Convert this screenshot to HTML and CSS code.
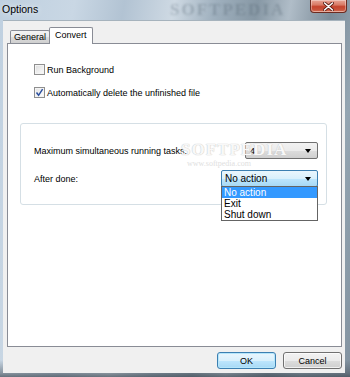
FILE: index.html
```html
<!DOCTYPE html>
<html>
<head>
<meta charset="utf-8">
<link rel="stylesheet" href="styles.css">
</head>
<body>
<div class="window">
  <div class="titlebar">
    <span class="title">Options</span>
    <span class="glass-mark">SOFTPEDIA</span>
    <div class="close">
      <svg width="11" height="9" viewBox="0 0 11 9"><path d="M1.5 1 L9.5 8 M9.5 1 L1.5 8" stroke="#5a1c12" stroke-width="3.2" stroke-linecap="round"/><path d="M1.5 1 L9.5 8 M9.5 1 L1.5 8" stroke="#fff" stroke-width="1.6" stroke-linecap="round"/></svg>
    </div>
  </div>
  <div class="client">
    <div class="tabs">
      <div class="tab">General</div>
      <div class="tab active">Convert</div>
    </div>
    <div class="panel">
      <div class="checks">
        <label class="check"><span class="box"></span><span>Run Background</span></label>
        <label class="check"><span class="box checked"><svg width="9" height="9" viewBox="0 0 9 9"><path d="M1.5 4.5 L3.6 7.3 L7.6 1.2" fill="none" stroke="#2b4f9e" stroke-width="1.5"/></svg></span><span>Automatically delete the unfinished file</span></label>
      </div>
      <div class="group">
        <div class="row">
          <span>Maximum simultaneous running tasks:</span>
          <div class="combo small"><span>4</span><i class="arrow"></i></div>
        </div>
        <div class="row">
          <span>After done:</span>
          <div class="combo focus"><span>No action</span><i class="arrow"></i>
            <ul class="list">
              <li class="sel">No action</li>
              <li>Exit</li>
              <li>Shut down</li>
            </ul>
          </div>
        </div>
        <div class="mark">
          <span class="mark-big">SOFTPEDIA</span>
          <span class="mark-small">www.softpedia.com</span>
        </div>
      </div>
    </div>
    <div class="buttons">
      <button class="btn default">OK</button>
      <button class="btn">Cancel</button>
    </div>
  </div>
</div>
</body>
</html>
```

FILE: styles.css
```css
* { box-sizing: border-box; }
html, body { margin: 0; padding: 0; }
body {
  width: 350px;
  height: 377px;
  overflow: hidden;
  font-family: "Liberation Sans", Arial, sans-serif;
  font-size: 9px;
  color: #000;
}
.window {
  width: 350px;
  height: 377px;
  display: flex;
  flex-direction: column;
  background:
    linear-gradient(180deg, rgba(255,255,255,0) 0, rgba(255,255,255,0) 360px, rgba(70,80,90,0.5) 373px, rgba(60,70,80,0.7) 377px),
    linear-gradient(100deg, #bfd0e0 0%, #c9d7e4 18%, #b2c3d3 30%, #ced9e3 42%, #9fb0be 52%, #8798a5 62%, #b0bdc8 70%, #7b8b98 80%, #94a5b2 88%, #8292a0 100%);
  position: relative;
}
.titlebar {
  height: 20px;
  display: flex;
  justify-content: space-between;
  align-items: flex-start;
  padding: 0 3px 0 2px;
  position: relative;
}
.title {
  font-size: 10.5px;
  padding-top: 3px;
  color: #000;
  text-shadow: 0 0 6px rgba(255,255,255,0.9);
}
.glass-mark {
  position: absolute;
  left: 170px;
  top: 0;
  font-family: "Liberation Serif", serif;
  font-size: 17px;
  font-weight: bold;
  letter-spacing: 2px;
  color: rgba(80,95,108,0.3);
  filter: blur(1.2px);
}
.close {
  width: 37px;
  height: 13px;
  border: 1px solid #6d2b20;
  border-top: none;
  border-radius: 0 0 4px 4px;
  background: linear-gradient(180deg, #e8a596 0%, #d97b66 40%, #c5442d 55%, #c9553d 85%, #e08f77 100%);
  display: flex;
  align-items: center;
  justify-content: center;
  box-shadow: inset 0 0 0 1px rgba(255,255,255,0.35);
  position: relative;
  z-index: 1;
}
.client {
  flex: 1;
  margin: 0 5px 4px 3px;
  background: #f0f0f0;
  padding: 6px 3px 0 4px;
  display: flex;
  flex-direction: column;
  border-top: 1px solid #a6b3bd;
}
.tabs {
  display: flex;
  align-items: flex-end;
  height: 16px;
  padding-left: 3px;
  position: relative;
  z-index: 2;
}
.tab {
  height: 13px;
  border: 1px solid #898c95;
  border-bottom: none;
  background: linear-gradient(180deg, #f3f3f3 0%, #ebebeb 50%, #dcdcdc 51%, #cfcfcf 100%);
  padding: 0 3px 0 3px;
  line-height: 12px;
  border-radius: 2px 2px 0 0;
}
.tab.active {
  height: 17px;
  margin-bottom: -1px;
  margin-left: -1px;
  background: #fff;
  padding: 1px 5px 0 5px;
  line-height: 13px;
}
.panel {
  height: 304px;
  border: 1px solid #898c95;
  background: #fff;
  padding: 20px 14px 0 12px;
  position: relative;
}
.checks {
  display: flex;
  flex-direction: column;
  gap: 12px;
  padding-left: 14px;
}
.check {
  display: flex;
  align-items: center;
  gap: 2px;
  height: 11px;
}
.box {
  width: 11px;
  height: 11px;
  border: 1px solid #8f8f8f;
  background: linear-gradient(135deg, #dcdcdc 0%, #f0f0f0 60%, #fbfbfb 100%);
  box-shadow: inset 0 0 0 1px #f4f4f4;
  display: flex;
  align-items: center;
  justify-content: center;
}
.box.checked { background: linear-gradient(135deg, #e2e2e2 0%, #f4f4f4 60%, #ffffff 100%); }
.group {
  margin-top: 25px;
  width: 307px;
  height: 82px;
  border: 1px solid #d5dfe5;
  border-radius: 3px;
  padding: 18px 8px 0 13px;
  display: flex;
  flex-direction: column;
  gap: 11px;
  position: relative;
}
.row {
  display: flex;
  justify-content: space-between;
  align-items: center;
  height: 17px;
}
.combo {
  position: relative;
  height: 17px;
  width: 97px;
  border: 1px solid #707070;
  border-radius: 2px;
  background: linear-gradient(180deg, #f2f2f2 0%, #ebebeb 50%, #dddddd 51%, #cfcfcf 100%);
  display: flex;
  align-items: center;
  padding-left: 4px;
}
.combo.small { width: 73px; }
.combo.focus {
  border-color: #3c7fb1;
  background: linear-gradient(180deg, #eaf6fd 0%, #d9f0fc 50%, #bee6fd 51%, #a7d9f5 100%);
  font-size: 10px;
  padding-left: 3px;
}
.arrow {
  position: absolute;
  right: 6px;
  top: 6px;
  width: 0;
  height: 0;
  border-left: 3.5px solid transparent;
  border-right: 3.5px solid transparent;
  border-top: 4px solid #000;
}
.list {
  position: absolute;
  left: -1px;
  top: 15px;
  width: 97px;
  margin: 0;
  padding: 0;
  list-style: none;
  background: #fff;
  border: 1px solid #646464;
  z-index: 5;
  font-size: 10px;
}
.list li {
  height: 11px;
  line-height: 11px;
  padding-left: 2px;
}
.list li.sel { background: #3399ff; color: #fff; }
.mark {
  position: absolute;
  left: 160px;
  top: 18px;
  display: flex;
  flex-direction: column;
  align-items: flex-start;
  pointer-events: none;
  z-index: 1;
}
.mark-big {
  font-family: "Liberation Serif", serif;
  font-size: 17px;
  font-weight: bold;
  letter-spacing: 1px;
  color: rgba(255,255,255,0.9);
  text-shadow: 0 0 1px #c8c8c8, 0 0 1px #c8c8c8;
  line-height: 16px;
}
.mark-small {
  font-family: "Liberation Serif", serif;
  font-size: 8px;
  color: #e0e0e0;
  margin-left: 6px;
  margin-top: 1px;
}
.buttons {
  display: flex;
  justify-content: flex-end;
  gap: 7px;
  padding-top: 5px;
}
.btn {
  font-family: "Liberation Sans", Arial, sans-serif;
  font-size: 9px;
  width: 59px;
  height: 17px;
  border: 1px solid #707070;
  border-radius: 3px;
  background: linear-gradient(180deg, #f2f2f2 0%, #ebebeb 50%, #dddddd 51%, #cfcfcf 100%);
  box-shadow: inset 0 0 0 1px rgba(255,255,255,0.7);
  padding: 0;
  color: #000;
}
.btn.default {
  border-color: #3c7fb1;
  background: linear-gradient(180deg, #eaf6fd 0%, #d9f0fc 50%, #bee6fd 51%, #a7d9f5 100%);
  box-shadow: inset 0 0 0 1px #b5e6fb;
}
```
